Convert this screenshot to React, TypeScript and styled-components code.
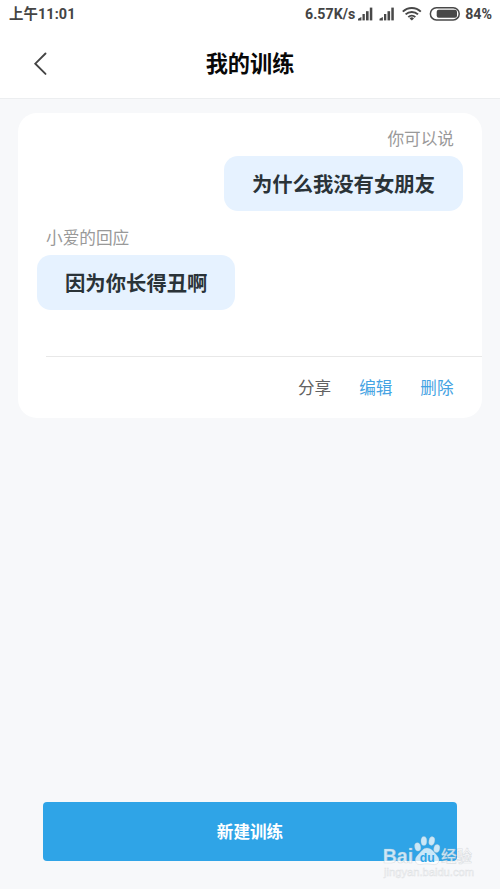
import React from "react";
import styled, { createGlobalStyle } from "styled-components";

const GlobalStyle = createGlobalStyle`
  * { box-sizing: border-box; }
  body {
    margin: 0;
    background: #f7f8fa;
    font-family: "Noto Sans CJK SC", sans-serif;
  }
`;

const Screen = styled.div`
  position: relative;
  display: flex;
  flex-direction: column;
  width: 500px;
  height: 889px;
  overflow: hidden;
  background: #f7f8fa;
`;

const StatusBar = styled.div`
  display: flex;
  justify-content: space-between;
  align-items: center;
  flex: none;
  height: 28px;
  padding: 0 8px 0 9px;
  background: #fff;
  color: #444;
  font: 700 14.2px/28px Roboto, "Noto Sans CJK SC", sans-serif;
  white-space: nowrap;
`;

const Clock = styled.span`
  padding-top: 2px;
  font-size: 14.4px;
  letter-spacing: 0.1px;
`;

const StatusGroup = styled.div`
  display: flex;
  align-items: center;
  height: 28px;
`;

const StatusIcons = styled.svg`
  display: block;
  margin: 0 5px 0 3px;
`;

const NavBar = styled.header`
  display: grid;
  grid-template-columns: 80px 1fr 80px;
  align-items: center;
  flex: none;
  height: 71px;
  background: #fff;
  border-bottom: 1px solid #eceef0;
`;

const BackButton = styled.button`
  display: flex;
  justify-content: center;
  align-items: center;
  height: 70px;
  padding: 1px 0 0;
  border: 0;
  background: none;
`;

const Title = styled.h1`
  margin: 0;
  text-align: center;
  font-size: 22.2px;
  font-weight: 700;
  line-height: 68px;
  height: 70px;
  color: #080808;
`;

const Card = styled.section`
  display: flex;
  flex-direction: column;
  flex: none;
  height: 305px;
  margin: 14px 18px 0;
  border-radius: 19px;
  background: #fff;
`;

const Message = styled.div<{ $mine?: boolean }>`
  display: flex;
  flex-direction: column;
  align-items: ${(p) => (p.$mine ? "flex-end" : "flex-start")};
  height: 98.5px;
  padding: ${(p) => (p.$mine ? 12.2 : 12.6)}px 19px 0;
`;

const Label = styled.div`
  flex: none;
  height: 31px;
  padding: 0 9px;
  font-size: 16.65px;
  line-height: 26px;
  color: #999;
`;

const Bubble = styled.div`
  flex: none;
  height: 55px;
  padding: 0 28px;
  border-radius: 14px;
  background: #e6f2ff;
  color: #2a3338;
  font-size: 20.35px;
  font-weight: 700;
  line-height: 55px;
  white-space: nowrap;
`;

const Actions = styled.div`
  display: flex;
  justify-content: flex-end;
  align-items: flex-start;
  gap: 28px;
  margin: auto 0 0 28px;
  height: 62px;
  padding-right: 28.5px;
  border-top: 1px solid #e8e8e8;
`;

const Action = styled.button<{ $accent?: boolean }>`
  padding: 0;
  border: 0;
  background: none;
  color: ${(p) => (p.$accent ? "#45a3e3" : "#626262")};
  font: 400 16.6px/61px "Noto Sans CJK SC", sans-serif;
`;

const CreateButton = styled.button`
  flex: none;
  height: 59px;
  margin: auto 43px 28px;
  padding: 0;
  border: 0;
  border-radius: 4px;
  background: #2fa4e7;
  color: #fff;
  font: 700 16.6px/59px "Noto Sans CJK SC", sans-serif;
`;

const Watermark = styled.svg`
  position: absolute;
  left: 378px;
  top: 830px;
  pointer-events: none;
`;

const StatusGlyphs = () => (
  <StatusIcons width="102" height="28" viewBox="0 0 102 28">
    <g fill="#484848">
      {[0, 21.5].map((x) => (
        <g key={x} transform={`translate(${x} 0)`}>
          <path d="M0 20.4V18.8L3.4 17v3.4z" />
          <rect x="4.5" y="14" width="2.3" height="6.4" />
          <rect x="8" y="11.2" width="2.6" height="9.2" />
          <rect x="11.8" y="7.6" width="2.5" height="12.8" />
        </g>
      ))}
    </g>
    <g fill="none" stroke="#484848" strokeWidth="2">
      <path d="M44.8 11.6a13 13 0 0 1 18 0" />
      <path d="M47.6 14.4a9 9 0 0 1 12.4 0" />
      <path d="M50.3 17.1a5 5 0 0 1 7 0" />
    </g>
    <path d="M51.6 18.4a3.1 3.1 0 0 1 4.4 0l-2.2 2.2z" fill="#484848" />
    <rect x="72.4" y="7.7" width="28.8" height="12.2" rx="6" fill="none" stroke="#484848" strokeWidth="1.5" />
    <rect x="78.7" y="9.8" width="20.3" height="8" rx="2" fill="#484848" />
  </StatusIcons>
);

const BaiduMark = () => (
  <Watermark width="110" height="59" viewBox="0 0 110 59">
    <g fill="#fff" fillOpacity="0.75" stroke="#b8c0c5" strokeOpacity="0.5" strokeWidth="0.6">
      <ellipse cx="39.7" cy="16.9" rx="3" ry="4.2" transform="rotate(-12 39.7 16.9)" />
      <ellipse cx="45.9" cy="11" rx="2.9" ry="4.5" />
      <ellipse cx="53.8" cy="11" rx="2.9" ry="4.4" transform="rotate(12 53.8 11)" />
      <ellipse cx="58.8" cy="18.5" rx="3" ry="4" transform="rotate(12 58.8 18.5)" />
      <path d="M49 18c-4 0-5.5 3.5-9 6.800-5 4.600-2.400 10.700 3 9.700 4-1 8-.8 11.500 0 6 1 8.500-4.200 4.800-8.600C56 22.100 53.500 18 49 18z" />
      <text x="4.700" y="33" fontFamily="Liberation Sans" fontSize="19.500" fontWeight="700" textLength="30.500" lengthAdjust="spacingAndGlyphs">Bai</text>
      <text x="63" y="32" fontFamily="Noto Sans CJK SC" fontSize="15.500" fontWeight="500">经验</text>
    </g>
    <text x="41.800" y="31.500" fontFamily="Liberation Sans" fontSize="13.500" fontWeight="700" fill="#2fa4e7" textLength="15" lengthAdjust="spacingAndGlyphs">du</text>
    <text x="6" y="46" fontFamily="Liberation Sans" fontSize="10.500" fill="#f7f8fa" stroke="#dfe2e4" strokeWidth="0.450" textLength="90" lengthAdjust="spacingAndGlyphs">jingyan.baidu.com</text>
  </Watermark>
);

export default function App() {
  return (
    <>
      <GlobalStyle />
      <Screen>
        <StatusBar>
          <Clock>上午11:01</Clock>
          <StatusGroup>
            <span>6.57K/s</span>
            <StatusGlyphs />
            <span>84%</span>
          </StatusGroup>
        </StatusBar>
        <NavBar>
          <BackButton aria-label="返回">
            <svg width="16" height="24" viewBox="0 0 16 24" fill="none" stroke="#444" strokeWidth="1.9" strokeLinecap="round">
              <path d="M13.5 1.5L3.3 11.7l10.2 10.200" />
            </svg>
          </BackButton>
          <Title>我的训练</Title>
        </NavBar>
        <Card>
          <Message $mine>
            <Label>你可以说</Label>
            <Bubble>为什么我没有女朋友</Bubble>
          </Message>
          <Message>
            <Label>小爱的回应</Label>
            <Bubble>因为你长得丑啊</Bubble>
          </Message>
          <Actions>
            <Action>分享</Action>
            <Action $accent>编辑</Action>
            <Action $accent>删除</Action>
          </Actions>
        </Card>
        <CreateButton>新建训练</CreateButton>
        <BaiduMark />
      </Screen>
    </>
  );
}
